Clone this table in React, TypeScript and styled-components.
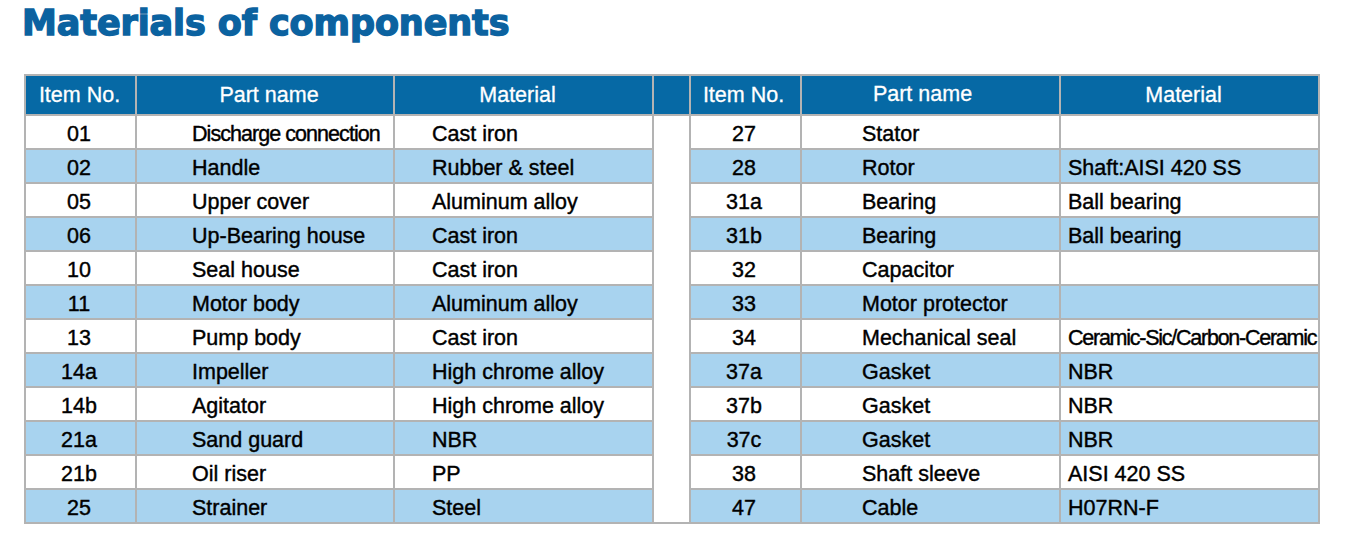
import React from "react";
import styled, { createGlobalStyle } from "styled-components";

const Global = createGlobalStyle`
  html, body { margin: 0; padding: 0; background: #ffffff; }
  body { font-family: "Liberation Sans", Arial, sans-serif; }
`;

const Page = styled.div`
  width: 1352px;
  height: 546px;
  box-sizing: border-box;
  padding: 3px 0 0 24px;
  background: #ffffff;
`;

const Title = styled.h1`
  margin: 0 0 0 -2px;
  font-family: "DejaVu Sans", "Liberation Sans", sans-serif;
  font-weight: 700;
  font-size: 35px;
  line-height: 40px;
  color: #0b62a0;
  letter-spacing: -0.1px;
  -webkit-text-stroke: 1.4px #0b62a0;
`;

const Grid = styled.div`
  margin-top: 31px;
  display: grid;
  grid-template-columns: 109px 256px 257px 35px 109px 257px 257px;
  grid-template-rows: 38px repeat(12, 32px);
  gap: 2px;
  padding: 2px;
  width: max-content;
  background: #b3b3b3;
`;

const HeadCell = styled.div<{ $shift?: number; $raise?: number }>`
  background: #0669a5;
  color: #ffffff;
  font-size: 21.5px;
  -webkit-text-stroke: 0.3px #ffffff;
  display: flex;
  align-items: center;
  justify-content: center;
  padding-left: ${(p) => (p.$shift && p.$shift > 0 ? p.$shift * 2 : 0)}px;
  padding-right: ${(p) => (p.$shift && p.$shift < 0 ? -p.$shift * 2 : 0)}px;
  padding-bottom: ${(p) => (p.$raise ? p.$raise * 2 : 0)}px;
  box-sizing: border-box;
  white-space: nowrap;
`;

const Spacer = styled.div`
  grid-column: 4;
  grid-row: 2 / span 12;
  background: #ffffff;
`;

const Cell = styled.div<{ $alt: boolean; $align: "center" | "left"; $pad?: number; $tight?: number }>`
  background: ${(p) => (p.$alt ? "#a8d3ef" : "#ffffff")};
  color: #000000;
  font-size: 21.5px;
  line-height: 28px;
  -webkit-text-stroke: 0.4px #000000;
  padding-top: 4px;
  box-sizing: border-box;
  display: flex;
  align-items: center;
  justify-content: ${(p) => (p.$align === "center" ? "center" : "flex-start")};
  padding-left: ${(p) => p.$pad ?? 0}px;
  padding-right: ${(p) => (p.$align === "center" ? 3 : 0)}px;
  letter-spacing: ${(p) => p.$tight ?? 0}px;
  white-space: nowrap;
  overflow: hidden;
`;

type Row = { no: string; part: string; mat: string; partTight?: number; matTight?: number };

const left: Row[] = [
  { no: "01", part: "Discharge connection", mat: "Cast iron", partTight: -0.95 },
  { no: "02", part: "Handle", mat: "Rubber & steel" },
  { no: "05", part: "Upper cover", mat: "Aluminum alloy" },
  { no: "06", part: "Up-Bearing house", mat: "Cast iron" },
  { no: "10", part: "Seal house", mat: "Cast iron" },
  { no: "11", part: "Motor body", mat: "Aluminum alloy" },
  { no: "13", part: "Pump body", mat: "Cast iron" },
  { no: "14a", part: "Impeller", mat: "High chrome alloy" },
  { no: "14b", part: "Agitator", mat: "High chrome alloy" },
  { no: "21a", part: "Sand guard", mat: "NBR" },
  { no: "21b", part: "Oil riser", mat: "PP" },
  { no: "25", part: "Strainer", mat: "Steel" },
];

const right: Row[] = [
  { no: "27", part: "Stator", mat: "" },
  { no: "28", part: "Rotor", mat: "Shaft:AISI 420 SS" },
  { no: "31a", part: "Bearing", mat: "Ball bearing" },
  { no: "31b", part: "Bearing", mat: "Ball bearing" },
  { no: "32", part: "Capacitor", mat: "" },
  { no: "33", part: "Motor protector", mat: "" },
  { no: "34", part: "Mechanical seal", mat: "Ceramic-Sic/Carbon-Ceramic", matTight: -1.25 },
  { no: "37a", part: "Gasket", mat: "NBR" },
  { no: "37b", part: "Gasket", mat: "NBR" },
  { no: "37c", part: "Gasket", mat: "NBR" },
  { no: "38", part: "Shaft sleeve", mat: "AISI 420 SS" },
  { no: "47", part: "Cable", mat: "H07RN-F" },
];

export default function App() {
  return (
    <>
      <Global />
      <Page>
        <Title>Materials of components</Title>
        <Grid>
          <HeadCell $shift={-1}>Item No.</HeadCell>
          <HeadCell $shift={4}>Part name</HeadCell>
          <HeadCell $shift={-6}>Material</HeadCell>
          <HeadCell />
          <HeadCell $shift={-2}>Item No.</HeadCell>
          <HeadCell $shift={-8} $raise={1}>Part name</HeadCell>
          <HeadCell $shift={-6}>Material</HeadCell>
          <Spacer />
          {left.map((l, i) => {
            const r = right[i];
            const alt = i % 2 === 1;
            return (
              <React.Fragment key={l.no}>
                <Cell $alt={alt} $align="center">{l.no}</Cell>
                <Cell $alt={alt} $align="left" $pad={55} $tight={l.partTight}>{l.part}</Cell>
                <Cell $alt={alt} $align="left" $pad={37} $tight={l.matTight}>{l.mat}</Cell>
                <Cell $alt={alt} $align="center">{r.no}</Cell>
                <Cell $alt={alt} $align="left" $pad={60} $tight={r.partTight}>{r.part}</Cell>
                <Cell $alt={alt} $align="left" $pad={7} $tight={r.matTight}>{r.mat}</Cell>
              </React.Fragment>
            );
          })}
        </Grid>
      </Page>
    </>
  );
}
